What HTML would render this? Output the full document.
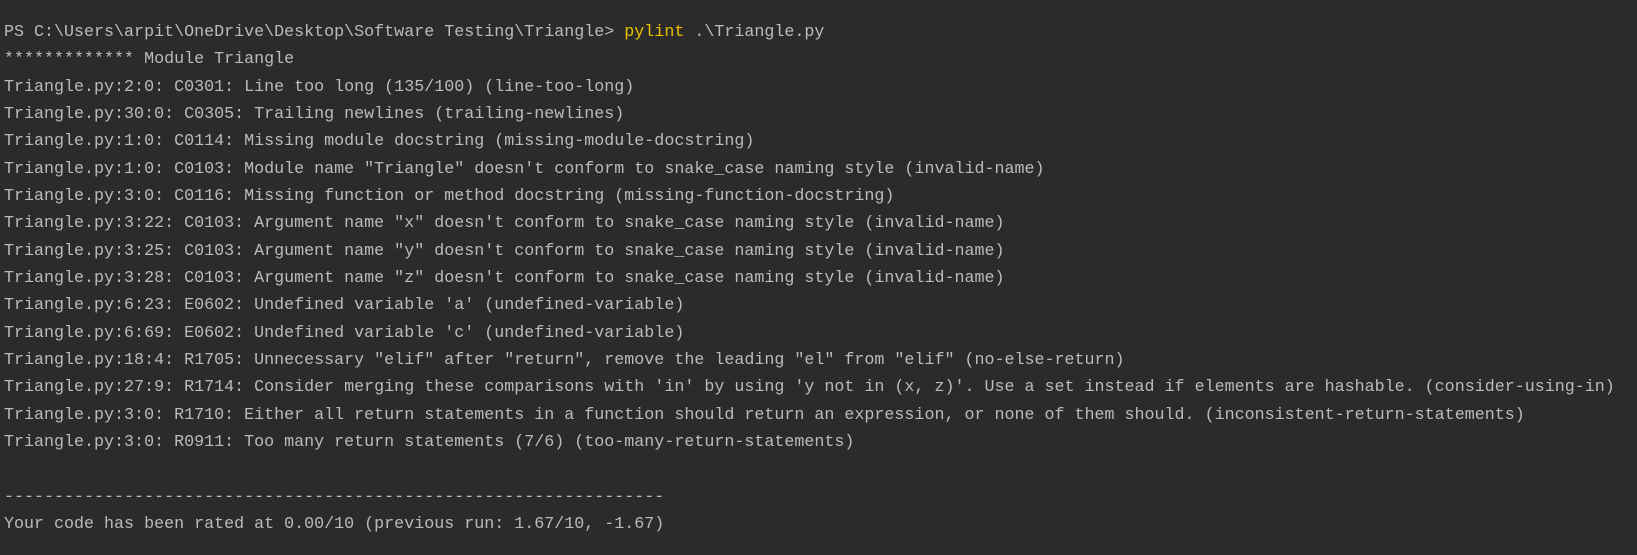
<!DOCTYPE html>
<html><head><meta charset="utf-8"><style>
html,body{margin:0;padding:0;background:#2b2b2b;width:1637px;height:555px;overflow:hidden}
pre{margin:0;position:absolute;left:4px;top:19px;font-family:"Liberation Mono",monospace;font-size:16.68px;line-height:27.35px;color:#bbbbbb;white-space:pre}
.y{color:#e8c000}
</style></head><body><pre>PS C:\Users\arpit\OneDrive\Desktop\Software Testing\Triangle&gt; <span class="y">pylint</span> .\Triangle.py
************* Module Triangle
Triangle.py:2:0: C0301: Line too long (135/100) (line-too-long)
Triangle.py:30:0: C0305: Trailing newlines (trailing-newlines)
Triangle.py:1:0: C0114: Missing module docstring (missing-module-docstring)
Triangle.py:1:0: C0103: Module name "Triangle" doesn't conform to snake_case naming style (invalid-name)
Triangle.py:3:0: C0116: Missing function or method docstring (missing-function-docstring)
Triangle.py:3:22: C0103: Argument name "x" doesn't conform to snake_case naming style (invalid-name)
Triangle.py:3:25: C0103: Argument name "y" doesn't conform to snake_case naming style (invalid-name)
Triangle.py:3:28: C0103: Argument name "z" doesn't conform to snake_case naming style (invalid-name)
Triangle.py:6:23: E0602: Undefined variable 'a' (undefined-variable)
Triangle.py:6:69: E0602: Undefined variable 'c' (undefined-variable)
Triangle.py:18:4: R1705: Unnecessary "elif" after "return", remove the leading "el" from "elif" (no-else-return)
Triangle.py:27:9: R1714: Consider merging these comparisons with 'in' by using 'y not in (x, z)'. Use a set instead if elements are hashable. (consider-using-in)
Triangle.py:3:0: R1710: Either all return statements in a function should return an expression, or none of them should. (inconsistent-return-statements)
Triangle.py:3:0: R0911: Too many return statements (7/6) (too-many-return-statements)

------------------------------------------------------------------
Your code has been rated at 0.00/10 (previous run: 1.67/10, -1.67)</pre></body></html>
